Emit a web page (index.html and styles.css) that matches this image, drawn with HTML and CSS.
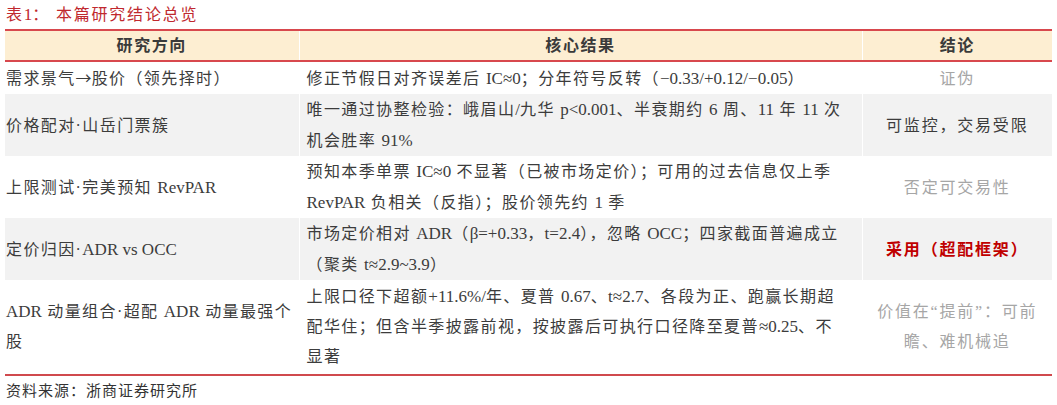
FILE: index.html
```html
<!DOCTYPE html>
<html lang="zh-CN">
<head>
<meta charset="utf-8">
<title>本篇研究结论总览</title>
<link rel="stylesheet" href="styles.css">
</head>
<body>
<div class="title">表<span class="lat">1</span>：&nbsp;本篇研究结论总览</div>
<table class="summary">
  <colgroup>
    <col class="c1">
    <col class="c2">
    <col class="c3">
  </colgroup>
  <thead>
    <tr>
      <th>研究方向</th>
      <th>核心结果</th>
      <th>结论</th>
    </tr>
  </thead>
  <tbody>
    <tr>
      <td class="dir">需求景气<span class="arrow">→</span>股价（领先择时）</td>
      <td class="res">修正节假日对齐误差后 <span class="lat">IC≈0</span>；分年符号反转（<span class="lat">−0.33/+0.12/−0.05</span>）</td>
      <td class="con muted">证伪</td>
    </tr>
    <tr class="alt">
      <td class="dir">价格配对·山岳门票簇</td>
      <td class="res">唯一通过协整检验：峨眉山<span class="lat">/</span>九华 <span class="lat">p&lt;0.001</span>、半衰期约 <span class="lat">6</span> 周、<span class="lat">11</span> 年 <span class="lat">11</span> 次<br>机会胜率 <span class="lat">91%</span></td>
      <td class="con">可监控，交易受限</td>
    </tr>
    <tr>
      <td class="dir">上限测试·完美预知 <span class="lat">RevPAR</span></td>
      <td class="res">预知本季单票 <span class="lat">IC≈0</span> 不显著（已被市场定价）；可用的过去信息仅上季<br><span class="lat">RevPAR</span> 负相关（反指）；股价领先约 <span class="lat">1</span> 季</td>
      <td class="con muted">否定可交易性</td>
    </tr>
    <tr class="alt">
      <td class="dir">定价归因·<span class="lat">ADR vs OCC</span></td>
      <td class="res">市场定价相对 <span class="lat">ADR</span>（<span class="lat">β=+0.33</span>，<span class="lat">t=2.4</span>），忽略 <span class="lat">OCC</span>；四家截面普遍成立<br>（聚类 <span class="lat">t≈2.9~3.9</span>）</td>
      <td class="con adopt">采用（超配框架）</td>
    </tr>
    <tr class="last">
      <td class="dir"><span class="lat">ADR</span> 动量组合·超配 <span class="lat">ADR</span> 动量最强个<br>股</td>
      <td class="res">上限口径下超额<span class="lat">+11.6%/</span>年、夏普 <span class="lat">0.67</span>、<span class="lat">t≈2.7</span>、各段为正、跑赢长期超<br>配华住；但含半季披露前视，按披露后可执行口径降至夏普<span class="lat">≈0.25</span>、不<br>显著</td>
      <td class="con muted">价值在“提前”：可前<br>瞻、难机械追</td>
    </tr>
  </tbody>
</table>
<div class="source">资料来源：浙商证券研究所</div>
</body>
</html>
```
FILE: styles.css
```css
html, body {
  margin: 0;
  padding: 0;
  background: #ffffff;
}

body {
  padding: 5px 5px 0 5px;
  font-family: "Liberation Serif", "Noto Sans CJK SC", serif;
  color: #333333;
}

.title {
  font-size: 16px;
  line-height: 20px;
  color: #c0282e;
  letter-spacing: 1.8px;
  padding-left: 1px;
  margin-bottom: 4px;
}

.lat {
  letter-spacing: 0;
  font-size: 17px;
}

.arrow {
  font-family: "Noto Sans CJK SC", sans-serif;
  letter-spacing: 0;
}

.summary {
  width: 1047px;
  border-collapse: collapse;
  table-layout: fixed;
  font-size: 16px;
  letter-spacing: 1.4px;
}

.c1 { width: 294px; }
.c2 { width: 563px; }
.c3 { width: 190px; }

.summary th {
  background: #fdeed2;
  border-top: 2px solid #d8484d;
  border-bottom: 2px solid #d8484d;
  border-right: 1px solid #ffffff;
  height: 29px;
  padding: 0;
  font-weight: bold;
  color: #3a3a3a;
  text-align: center;
  vertical-align: middle;
  line-height: 29px;
  letter-spacing: 1.6px;
}

.summary th:last-child,
.summary td:last-child {
  border-right: none;
}

.summary td {
  padding: 0;
  line-height: 31px;
  vertical-align: middle;
  border-right: 1px solid #ffffff;
  color: #3c3c3c;
}

.summary tr.alt td {
  background: #f2f2f2;
}

.summary tr.last td {
  line-height: 30px;
  height: 94px;
  border-bottom: 2px solid #d04a4e;
}

.summary td.dir {
  padding-left: 1px;
}

.summary td.res {
  padding-left: 7px;
}

.summary td.con {
  text-align: center;
  letter-spacing: 1.8px;
}

.summary td.muted {
  color: #a6a6a6;
}

.summary td.adopt {
  color: #c00000;
  font-weight: bold;
}

.source {
  margin-top: 6px;
  padding-left: 1px;
  font-size: 15px;
  line-height: 18px;
  letter-spacing: 1px;
  color: #333333;
}
```
